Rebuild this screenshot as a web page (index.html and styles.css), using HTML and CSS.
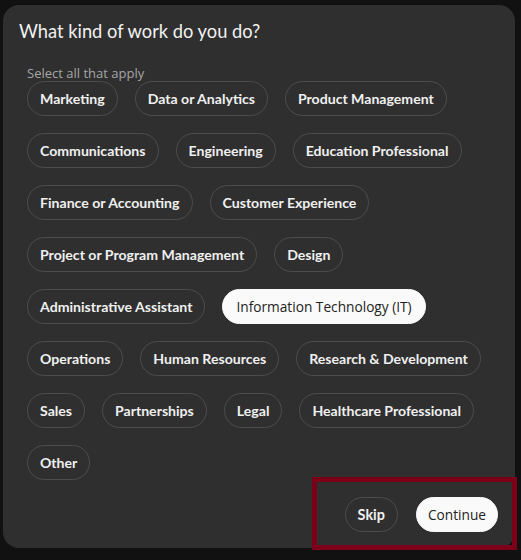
FILE: index.html
```html
<!DOCTYPE html>
<html>
<head>
<meta charset="utf-8">
<link rel="stylesheet" href="styles.css">
</head>
<body>
<div class="card">
  <h1 class="title">What kind of work do you do?</h1>
  <div class="group">
    <p class="hint">Select all that apply</p>
    <div class="chips">
      <span class="chip">Marketing</span>
      <span class="chip">Data or Analytics</span>
      <span class="chip">Product Management</span>
      <span class="chip">Communications</span>
      <span class="chip">Engineering</span>
      <span class="chip">Education Professional</span>
      <span class="chip">Finance or Accounting</span>
      <span class="chip">Customer Experience</span>
      <span class="chip">Project or Program Management</span>
      <span class="chip">Design</span>
      <span class="chip">Administrative Assistant</span>
      <span class="chip selected">Information Technology (IT)</span>
      <span class="chip">Operations</span>
      <span class="chip">Human Resources</span>
      <span class="chip">Research &amp; Development</span>
      <span class="chip">Sales</span>
      <span class="chip">Partnerships</span>
      <span class="chip">Legal</span>
      <span class="chip">Healthcare Professional</span>
      <span class="chip">Other</span>
    </div>
  </div>
  <div class="footer">
    <button class="btn skip">Skip</button>
    <button class="btn continue">Continue</button>
  </div>
</div>
<div class="highlight"></div>
</body>
</html>
```
FILE: styles.css
```css
html, body {
  margin: 0;
  padding: 0;
  background: #111111;
  width: 521px;
  height: 560px;
  overflow: hidden;
}
body {
  position: relative;
  font-family: "Lato", "Noto Sans", sans-serif;
}
.card {
  box-sizing: border-box;
  margin: 5px 0 0 3px;
  width: 512px;
  height: 543px;
  background: #2f2f2f;
  border-radius: 16px;
  padding: 13px 17px 16px 16px;
  display: flex;
  flex-direction: column;
}
.title {
  margin: 0;
  font-family: "Lato", "Noto Sans", sans-serif;
  font-weight: 400;
  font-size: 18.3px;
  line-height: 26px;
  color: #f2f2f2;
}
.group {
  padding-left: 8px;
  margin-top: 22px;
}
.hint {
  margin: 0;
  font-family: "Open Sans", "Noto Sans", sans-serif;
  font-size: 13px;
  line-height: 14px;
  color: #a6a6a6;
}
.chips {
  display: flex;
  flex-wrap: wrap;
  column-gap: 17px;
  row-gap: 17px;
  margin-top: 1px;
}
.chip {
  box-sizing: border-box;
  height: 35px;
  padding: 0 12px;
  border: 1px solid #4d4d4d;
  border-radius: 18px;
  font-weight: 700;
  font-size: 14.1px;
  line-height: 33px;
  color: #f0f0f0;
  white-space: nowrap;
}
.chip.selected {
  background: #fafafa;
  border-color: #fafafa;
  color: #222;
  font-family: "Open Sans", "Noto Sans", sans-serif;
  font-weight: 400;
  font-size: 13.7px;
  padding: 0 13px;
}
.footer {
  margin-top: auto;
  display: flex;
  justify-content: flex-end;
  gap: 18px;
}
.btn {
  box-sizing: border-box;
  height: 35px;
  border-radius: 18px;
  padding: 0 12px;
  cursor: pointer;
}
.skip {
  background: transparent;
  border: 1px solid #4d4d4d;
  color: #f0f0f0;
  font-family: "Lato", sans-serif;
  font-weight: 700;
  font-size: 14.4px;
}
.continue {
  background: #fafafa;
  border: 1px solid #fafafa;
  color: #222;
  font-family: "Open Sans", "Noto Sans", sans-serif;
  font-weight: 400;
  font-size: 13.7px;
  padding: 0 11px;
}
.highlight {
  position: absolute;
  left: 312px;
  top: 477px;
  width: 205px;
  height: 73px;
  box-sizing: border-box;
  border: 5px solid #7d0019;
}
```
